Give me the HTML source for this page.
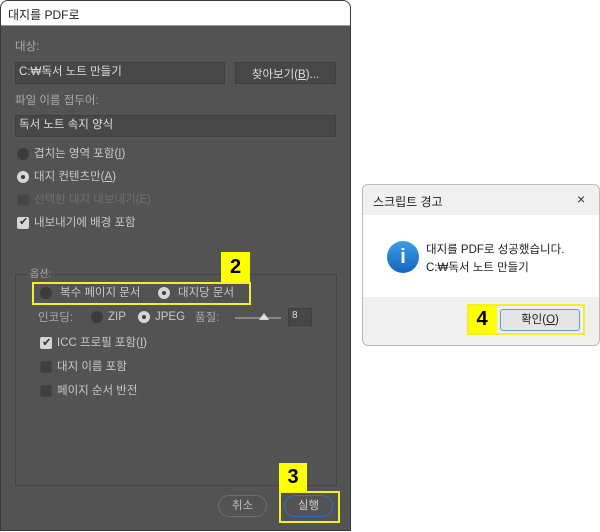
<!DOCTYPE html>
<html><head><meta charset="utf-8"><style>
*{margin:0;padding:0;box-sizing:border-box}
body{width:600px;height:532px;background:#fff;position:relative;overflow:hidden;font-family:"Liberation Sans","Noto Sans CJK KR",sans-serif;font-size:11.5px}
.a{position:absolute}
.dlg{left:0;top:0;width:351px;height:531px;background:#535353;border:1px solid #3a3a3a;border-radius:8px 8px 0 0;overflow:hidden}
.tb{left:1px;top:1px;width:349px;height:25px;background:#fff;color:#222;font-size:12px;padding:5px 0 0 7px;border-bottom:1px solid #999;border-radius:7px 7px 0 0}
.t{color:#c8c8c8;white-space:nowrap;line-height:14px}
.in{background:#474747;border:1px solid #3e3e3e;color:#ddd;padding:2px 3px;line-height:14px}
.rad{width:12px;height:12px;border-radius:50%;background:#3b3b3b}
.rad.on{background:#d6d6d6}
.rad.on::after{content:"";position:absolute;left:4px;top:4px;width:4px;height:4px;border-radius:50%;background:#3b3b3b}
.cb{width:12px;height:12px;background:#3f3f3f;border:1px solid #474747;border-radius:2px}
.cb.on{background:#d6d6d6;border:none}
.y{background:#ffff00;color:#000;font-weight:bold;font-size:20px;text-align:center}
.yb{border:2px solid #f4ef2a}
</style></head><body>
<div class="a dlg"></div>
<div class="a tb">대지를 PDF로</div>
<div class="a t" style="left:15px;top:40px;color:#aaa">대상:</div>
<div class="a in" style="left:15px;top:62px;width:210px;height:22px">C:₩독서 노트 만들기</div>
<div class="a in" style="left:235px;top:62px;width:101px;height:22px;text-align:center;padding-top:5px">찾아보기(<u>B</u>)...</div>
<div class="a t" style="left:15px;top:94px;color:#aaa">파일 이름 접두어:</div>
<div class="a in" style="left:15px;top:115px;width:321px;height:22px">독서 노트 속지 양식</div>
<div class="a rad" style="left:17px;top:148px"></div><div class="a t" style="left:34px;top:147px">겹치는 영역 포함(<u>I</u>)</div>
<div class="a rad on" style="left:17px;top:171px"></div><div class="a t" style="left:34px;top:170px">대지 컨텐츠만(<u>A</u>)</div>
<div class="a cb" style="left:17px;top:194px;opacity:.6"></div><div class="a t" style="left:34px;top:193px;color:#707070">선택한 대지 내보내기(E)</div>
<div class="a cb on" style="left:17px;top:217px"></div><div class="a" style="left:19px;top:215px;color:#333;font-size:11px">✔</div><div class="a t" style="left:34px;top:216px">내보내기에 배경 포함</div>
<div class="a" style="left:15px;top:274px;width:322px;height:212px;border:1px solid #444"></div>
<div class="a t" style="left:27px;top:268px;background:#535353;padding:0 3px;color:#aaa;font-size:10px">옵션:</div>
<div class="a y" style="left:221px;top:252px;width:29px;height:30px;line-height:30px">2</div>
<div class="a yb" style="left:32px;top:282px;width:219px;height:23px"></div>
<div class="a rad" style="left:40px;top:287px"></div><div class="a t" style="left:60px;top:286px">복수 페이지 문서</div>
<div class="a rad on" style="left:158px;top:287px"></div><div class="a t" style="left:178px;top:286px">대지당 문서</div>
<div class="a t" style="left:38px;top:311px;color:#aaa">인코딩:</div>
<div class="a rad" style="left:91px;top:311px"></div><div class="a t" style="left:108px;top:310px">ZIP</div>
<div class="a rad on" style="left:138px;top:311px"></div><div class="a t" style="left:155px;top:310px">JPEG</div>
<div class="a t" style="left:195px;top:311px;color:#aaa">품질:</div>
<div class="a" style="left:235px;top:317px;width:46px;height:2px;background:#888"></div>
<div class="a" style="left:259px;top:313px;width:0;height:0;border-left:5px solid transparent;border-right:5px solid transparent;border-bottom:7px solid #ddd"></div>
<div class="a in" style="left:288px;top:308px;width:24px;height:18px;padding:0 3px;font-size:10px">8</div>
<div class="a cb on" style="left:40px;top:337px"></div><div class="a" style="left:42px;top:335px;color:#333">✔</div><div class="a t" style="left:57px;top:336px">ICC 프로필 포함(<u>I</u>)</div>
<div class="a cb" style="left:40px;top:361px"></div><div class="a t" style="left:57px;top:360px">대지 이름 포함</div>
<div class="a cb" style="left:40px;top:385px"></div><div class="a t" style="left:57px;top:384px">페이지 순서 반전</div>
<div class="a t" style="left:218px;top:495px;width:49px;height:22px;border:1px solid #6e6e6e;border-radius:11px;text-align:center;line-height:20px;color:#bbb">취소</div>
<div class="a t" style="left:284px;top:495px;width:49px;height:22px;border:1px solid #2f6fd0;border-radius:11px;text-align:center;line-height:20px;color:#ccc">실행</div>
<div class="a y" style="left:279px;top:463px;width:28px;height:28px;line-height:28px">3</div>
<div class="a yb" style="left:279px;top:491px;width:61px;height:32px"></div>

<div class="a" style="left:362px;top:184px;width:238px;height:162px;border:1px solid #bbb;border-radius:6px;background:#f0f0f0;overflow:hidden">
<div class="a" style="left:0;top:30px;width:238px;height:82px;background:#fff"></div>
<div class="a" style="left:10px;top:8px;font-size:12px;color:#222">스크립트 경고</div>
<div class="a" style="left:214px;top:6px;font-size:14px;color:#333;font-weight:normal">×</div>
<div class="a" style="left:24px;top:56px;width:32px;height:32px;border-radius:50%;background:linear-gradient(#3a9ee8,#1565c0);color:#fff;text-align:center;font:bold 20px/32px 'Liberation Sans',sans-serif">i</div>
<div class="a" style="left:63px;top:56px;color:#222;line-height:18px">대지를 PDF로 성공했습니다.<br>C:₩독서 노트 만들기</div>
<div class="a y" style="left:104px;top:119px;width:30px;height:31px;line-height:31px">4</div>
<div class="a" style="left:104px;top:119px;width:118px;height:31px;border:2px solid #f4ef2a"></div>
<div class="a" style="left:137px;top:124px;width:80px;height:22px;border:1px solid #6a9ad8;background:#e5e5e5;border-radius:3px;text-align:center;line-height:20px;color:#222">확인(<u>O</u>)</div>
</div>
</body></html>
